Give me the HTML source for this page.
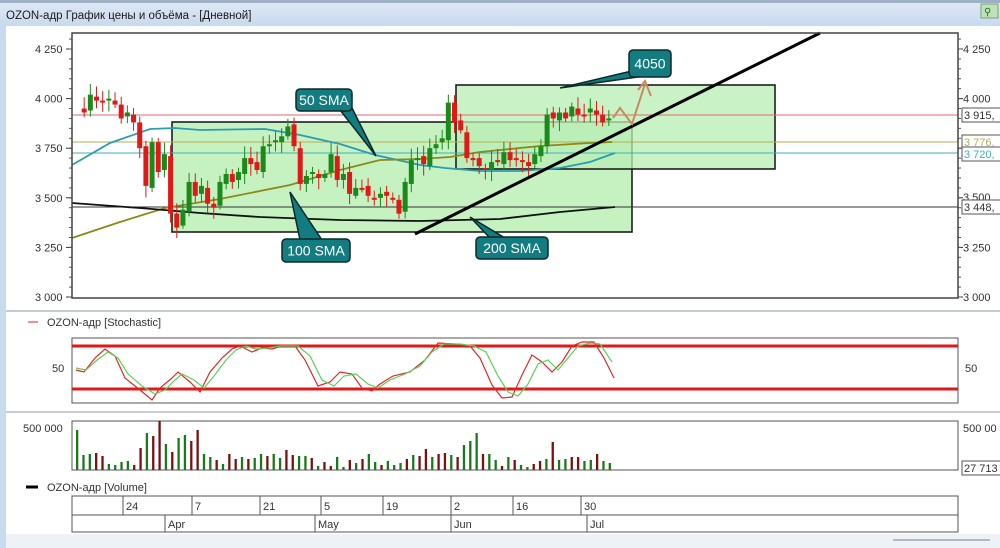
<!DOCTYPE html><html><head><meta charset="utf-8"><style>
body{margin:0;width:1000px;height:548px;overflow:hidden;background:#c8daee;font-family:"Liberation Sans","DejaVu Sans",sans-serif}
#w{position:absolute;left:0;top:0;width:1000px;height:548px}
</style></head><body>
<svg id="w" width="1000" height="548" xmlns="http://www.w3.org/2000/svg" font-family="Liberation Sans, DejaVu Sans, sans-serif">
<defs><linearGradient id="tb" x1="0" y1="0" x2="0" y2="1"><stop offset="0" stop-color="#dde8f5"/><stop offset="1" stop-color="#c9daee"/></linearGradient></defs>
<rect x="0" y="0" width="1000" height="548" fill="#c8daee"/>
<rect x="0" y="0" width="1000" height="3" fill="#9fb0c4"/>
<rect x="0" y="3" width="1000" height="22" fill="url(#tb)"/>
<text x="6" y="19" font-size="11.5" fill="#1a1a1a">OZON-адр График цены и объёма - [Дневной]</text>
<rect x="981" y="4" width="17" height="14" fill="#bfe3b8" stroke="#7aa07a"/>
<text x="984" y="15" font-size="10" fill="#2a6a2a">⚲</text>
<rect x="6" y="26" width="994" height="508" fill="#fff"/>
<rect x="6" y="534" width="994" height="14" fill="#eef2f7"/>
<line x1="893" y1="540" x2="990" y2="540" stroke="#b0b8c4" stroke-width="2"/>
<line x1="6" y1="311" x2="1000" y2="311" stroke="#c6ccd4" stroke-width="2"/>
<line x1="6" y1="412" x2="1000" y2="412" stroke="#c6ccd4" stroke-width="2"/>
<g id="main"></g>
<g id="stoch"></g>
<g id="vol"></g>
</svg>
<script>
const NS="http://www.w3.org/2000/svg";
function el(p,t,a,txt){const e=document.createElementNS(NS,t);for(const k in a)e.setAttribute(k,a[k]);if(txt!==undefined)e.textContent=txt;p.appendChild(e);return e;}
const M=document.getElementById('main'),S=document.getElementById('stoch'),V=document.getElementById('vol');
const Y=p=>297-(p-3000)*49.6/250;
// axes ticks and labels
for(const [v,l] of [[4250,"4 250"],[4000,"4 000"],[3750,"3 750"],[3500,"3 500"],[3250,"3 250"],[3000,"3 000"]]){
 const y=Y(v);el(M,'text',{x:35,y:y+4,'font-size':11,fill:'#333'},l);el(M,'line',{x1:66,y1:y,x2:72,y2:y,stroke:'#333'});
 if(v!=3500)el(M,'text',{x:963,y:y+4,'font-size':11,fill:'#333'},l);el(M,'line',{x1:958,y1:y,x2:963,y2:y,stroke:'#333'});
}
for(let v=3000;v<=4300;v+=50){const y=Y(v);el(M,'line',{x1:69,y1:y,x2:72,y2:y,stroke:'#555'});el(M,'line',{x1:958,y1:y,x2:961,y2:y,stroke:'#555'});}
el(M,'text',{x:963,y:201,'font-size':11,fill:'#333'},"3 500");
// boxes
el(M,'rect',{x:172,y:122,width:460,height:110,fill:'#c6f2c2',stroke:'#111','stroke-width':1.5});
el(M,'rect',{x:456,y:85,width:319,height:84,fill:'#b8eeb4','fill-opacity':0.75,stroke:'#111','stroke-width':1.5});
// horizontal lines
el(M,'line',{x1:72,y1:115,x2:958,y2:115,stroke:'#e06a6a'});
el(M,'line',{x1:72,y1:142,x2:958,y2:142,stroke:'#b5ad55'});
el(M,'line',{x1:72,y1:153,x2:958,y2:153,stroke:'#3fb0b8'});
el(M,'line',{x1:72,y1:207,x2:958,y2:207,stroke:'#333'});
// MAs
el(M,'polyline',{points:"72,165 110,143 150,129 175,128 200,130 265,129 300,135 340,144 375,155 420,165 445,168 480,171 520,171 560,168 590,162 615,153",fill:'none',stroke:'#2a9db0','stroke-width':1.8});
el(M,'polyline',{points:"72,238 120,222 165,208 220,199 290,185 340,170 380,160 420,159 450,157 480,152 540,146 590,143 612,142",fill:'none',stroke:'#8a8a18','stroke-width':1.8});
el(M,'polyline',{points:"72,203 140,208 200,213 260,217 340,220 420,221 500,219 560,212 615,207",fill:'none',stroke:'#111','stroke-width':1.8});
// candles
const c=[3950,3930,4020,3990,3980,4000,3970,3900,3930,3880,3750,3560,3780,3630,3720,3420,3350,3440,3580,3510,3560,3470,3450,3580,3620,3580,3630,3700,3670,3640,3760,3770,3790,3810,3860,3760,3570,3610,3630,3600,3620,3720,3590,3620,3520,3550,3550,3510,3500,3520,3510,3490,3420,3580,3690,3700,3670,3750,3770,3800,3980,3880,3840,3700,3690,3660,3640,3680,3680,3730,3690,3700,3680,3660,3720,3760,3920,3900,3930,3900,3960,3920,3920,3950,3920,3880,3900];
const st=(615-78)/c.length;
for(let i=1;i<c.length;i++){const o=c[i-1]+(i%3-1)*10,cl=c[i],x=78+i*st;const up=cl>o;const col=up?'#1a8a1a':'#e01818';
 const hi=Math.max(o,cl)+20+(i*37%40),lo=Math.min(o,cl)-15-(i*53%45);
 el(M,'line',{x1:x,y1:Y(hi),x2:x,y2:Y(lo),stroke:col});
 const y1=Y(Math.max(o,cl)),h=Math.max(2,Y(Math.min(o,cl))-y1);el(M,'rect',{x:x-2.5,y:y1,width:5,height:h,fill:col});}
// trend line
el(M,'line',{x1:415,y1:234,x2:820,y2:33,stroke:'#000','stroke-width':3});
// arrow
el(M,'polyline',{points:"613,118 620,108 632,124 645,84",fill:'none',stroke:'#c98a60','stroke-width':2});
el(M,'polyline',{points:"638,90 645,81 651,96",fill:'none',stroke:'#c98a60','stroke-width':2});
// callouts
function call(x,y,w,h,t,pts){el(M,'polygon',{points:pts,fill:'#137c80',stroke:'#0a2a2a','stroke-width':1.5});el(M,'rect',{x,y,width:w,height:h,rx:4,fill:'#137c80',stroke:'#0a2a2a','stroke-width':1.5});el(M,'text',{x:x+w/2,y:y+h/2+5,'font-size':14,fill:'#fff','text-anchor':'middle'},t);}
call(296,89,56,22,"50 SMA","340,110 376,156 352,108");
call(282,239,68,23,"100 SMA","300,240 290,192 322,240");
call(476,237,72,22,"200 SMA","490,238 470,217 505,238");
call(629,50,42,27,"4050","636,70 560,88 645,76");
// right value boxes
for(const [y,t,col] of [[115,"3 915,",'#333'],[142,"3 776,",'#b5ad55'],[154,"3 720,",'#3fb0b8'],[207,"3 448,",'#333']]){el(M,'rect',{x:962,y:y-7,width:40,height:14,fill:'#fff',stroke:'#555'});el(M,'text',{x:964,y:y+4,'font-size':11,fill:col},t);}
el(M,'rect',{x:72,y:33,width:886,height:265,fill:'none',stroke:'#444','stroke-width':1.5});
// stochastic
el(S,'line',{x1:28,y1:322,x2:38,y2:322,stroke:'#e02020'});
el(S,'text',{x:47,y:326,'font-size':11,fill:'#333'},"OZON-адр [Stochastic]");
el(S,'rect',{x:72,y:338,width:886,height:65,fill:'#fff',stroke:'#555'});
el(S,'line',{x1:72,y1:346,x2:958,y2:346,stroke:'#e01818','stroke-width':3});
el(S,'line',{x1:72,y1:389,x2:958,y2:389,stroke:'#e01818','stroke-width':3});
el(S,'text',{x:52,y:372,'font-size':11,fill:'#333'},"50");el(S,'text',{x:965,y:372,'font-size':11,fill:'#333'},"50");
el(S,'polyline',{points:"76,370 84,372 95,358 105,349 115,356 125,378 140,390 152,400 160,388 172,378 178,372 190,382 200,392 210,372 222,358 232,349 240,346 252,352 262,348 272,349 285,345 295,346 305,360 318,386 330,382 340,372 352,374 362,388 372,391 380,384 393,376 410,372 425,360 438,343 455,344 470,346 480,358 492,385 502,398 512,397 522,375 532,355 542,362 552,372 562,362 572,346 582,342 594,342 604,358 614,378",fill:'none',stroke:'#e02828','stroke-width':1.2});
el(S,'polyline',{points:"76,368 86,370 97,360 108,352 118,358 128,374 142,386 155,394 165,390 175,380 182,374 194,380 204,388 214,376 226,360 236,350 246,346 256,349 268,348 280,346 298,346 310,356 322,380 334,386 344,376 356,374 368,384 378,388 390,380 405,374 420,366 432,352 444,344 460,344 474,346 486,352 498,376 508,392 518,396 528,384 538,364 548,360 558,370 568,358 578,346 590,343 600,344 612,362",fill:'none',stroke:'#5ad25a','stroke-width':1.2});
// volume
el(V,'rect',{x:72,y:421,width:886,height:49,fill:'#fff',stroke:'#555'});
el(V,'text',{x:23,y:432,'font-size':11,fill:'#333'},"500 000");el(V,'text',{x:963,y:432,'font-size':11,fill:'#333'},"500 00");
el(V,'rect',{x:962,y:461,width:40,height:14,fill:'#fff',stroke:'#555'});el(V,'text',{x:964,y:472,'font-size':11,fill:'#333'},"27 713");
const vh=[40,15,16,17,14,6,5,8,9,5,22,37,34,49,26,18,32,35,29,40,16,13,10,6,16,11,13,11,12,16,14,16,12,20,15,14,14,12,4,8,4,13,3,10,7,11,16,8,5,9,5,7,11,15,14,21,13,16,17,15,13,25,29,37,16,16,10,4,13,10,5,3,6,9,11,28,10,11,13,13,9,10,16,9,7];
const vs=(615-76)/vh.length;
vh.forEach((h,i)=>{const x=76+i*vs;el(V,'rect',{x:x,y:470-h,width:2.3,height:h,fill:(i%5==1||i%7==0||i%3==2)?'#1a7a1a':'#7a1010'});});
el(V,'line',{x1:26,y1:487,x2:38,y2:487,stroke:'#000','stroke-width':3});
el(V,'text',{x:47,y:491,'font-size':11,fill:'#333'},"OZON-адр [Volume]");
el(V,'rect',{x:72,y:496,width:886,height:36,fill:'#fff',stroke:'#555'});
el(V,'line',{x1:72,y1:515,x2:958,y2:515,stroke:'#555'});
for(const [x,t] of [[123,"24"],[192,"7"],[260,"21"],[321,"5"],[383,"19"],[451,"2"],[513,"16"],[581,"30"]]){el(V,'line',{x1:x,y1:496,x2:x,y2:515,stroke:'#555'});el(V,'text',{x:x+3,y:510,'font-size':11,fill:'#333'},t);}
for(const [x,t] of [[165,"Apr"],[315,"May"],[451,"Jun"],[587,"Jul"]]){el(V,'line',{x1:x,y1:515,x2:x,y2:532,stroke:'#555'});el(V,'text',{x:x+3,y:528,'font-size':11,fill:'#333'},t);}
</script>
</body></html>
